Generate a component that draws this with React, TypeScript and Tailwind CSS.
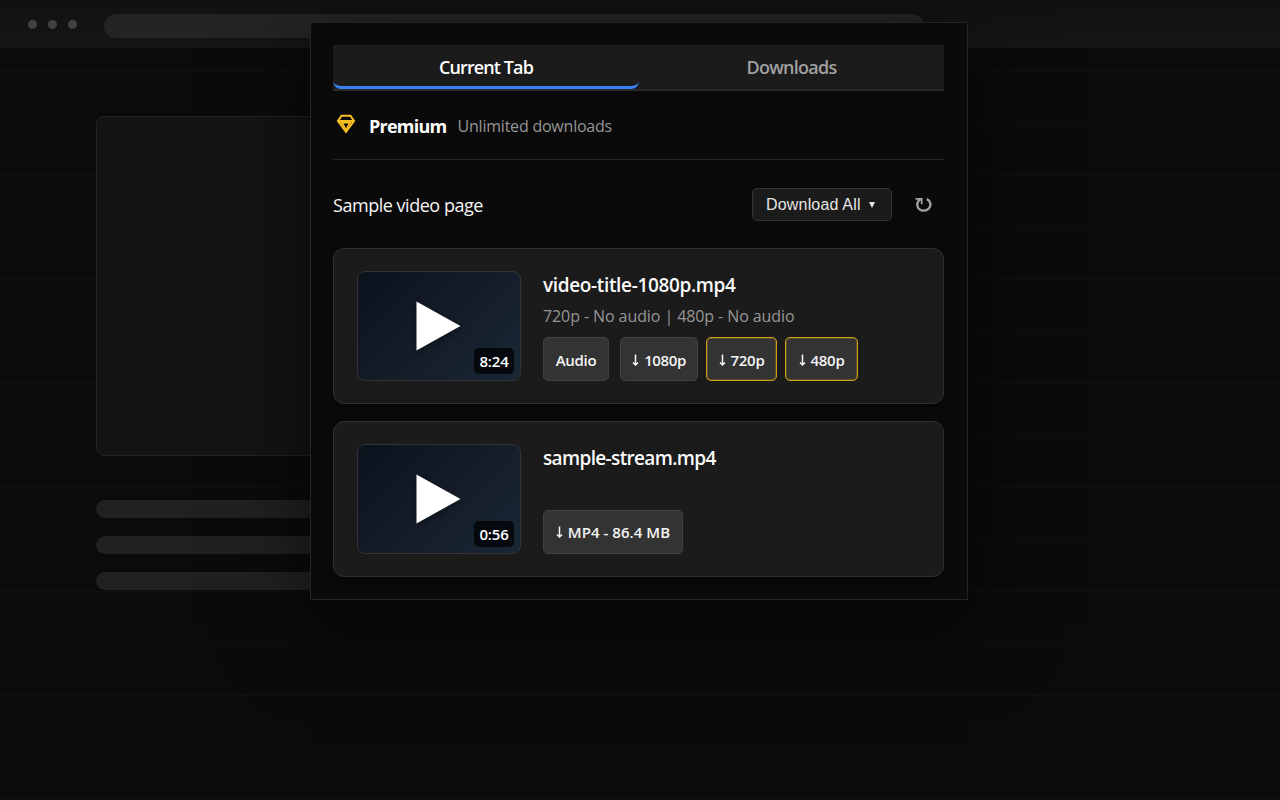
import React from 'react';

interface Action {
  label: string;
  arrow?: boolean;
  highlighted?: boolean;
  size: string;
}

interface Video {
  title: string;
  meta: string;
  duration: string;
  titleTracking: string;
  actions: Action[];
}

const videos: Video[] = [
  {
    title: 'video-title-1080p.mp4',
    meta: '720p - No audio | 480p - No audio',
    duration: '8:24',
    titleTracking: 'tracking-[-0.35px]',
    actions: [
      { label: 'Audio', size: 'w-[66px] mr-[11px] tracking-[-0.3px]' },
      { label: '1080p', arrow: true, size: 'w-[78px] mr-2 tracking-[-0.4px]' },
      { label: '720p', arrow: true, highlighted: true, size: 'w-[71px] mr-2 tracking-[-0.3px]' },
      { label: '480p', arrow: true, highlighted: true, size: 'w-[73px] tracking-[-0.3px]' },
    ],
  },
  {
    title: 'sample-stream.mp4',
    meta: '',
    duration: '0:56',
    titleTracking: 'tracking-[-0.65px]',
    actions: [{ label: 'MP4 - 86.4 MB', arrow: true, size: 'w-[140px] pb-[2px] tracking-[0.05px]' }],
  },
];

function PremiumIcon() {
  return (
    <svg className="mb-[2px] h-5 w-5" viewBox="0 0 20 20" fill="#fbbf24" fillRule="evenodd">
      <path d="M5 .7h10l4.300 6.300L10 19.500.7 7zM6 2.700 3.900 6.100h12.200L14 2.700zM3.900 8.200 10 16.300l6.100-8.100z" />
      <path d="M3.900 7.800h12.200L10 16.900zM7.500 9.400l2.500 4.800 2.500-4.800z" />
    </svg>
  );
}

function DownArrow() {
  return (
    <svg className="mt-[2px] mr-[5px] h-3 w-[7px] shrink-0" viewBox="0 0 7 12" fill="none" stroke="currentColor" strokeWidth="1.5">
      <path d="M3.5 0.500v10.500M1 8.500l2.500 2.500L6 8.500" />
    </svg>
  );
}

function RefreshIcon() {
  return (
    <svg className="h-4 w-[18px]" viewBox="0 0 18 16" fill="none" stroke="#a3a3a3" strokeWidth="2.400">
      <path d="M0.500 1.800h6.200v5.500" strokeWidth="1.700" />
      <path d="M5.500 2.500C3.200 3.500 2.200 5.700 2.300 8c.2 3.300 3 5.600 6.500 5.600 3.700 0 6.600-2.400 6.600-6.100 0-2.500-1.300-4.300-3.700-5.400" />
    </svg>
  );
}

function BrowserBackdrop() {
  return (
    <div className="h-full bg-[repeating-linear-gradient(to_bottom,#0b0b0b_0,#0b0b0b_51px,#111111_51px,#111111_52px)] bg-[position:0_20px]">
      <div className="flex h-12 items-start bg-gradient-to-b from-[#111111] to-[#161616] pl-7">
        <div className="mt-5 flex gap-[11px]">
          <span className="h-[9px] w-[9px] rounded-full bg-[#414141]" />
          <span className="h-[9px] w-[9px] rounded-full bg-[#414141]" />
          <span className="h-[9px] w-[9px] rounded-full bg-[#414141]" />
        </div>
        <div className="mt-[14px] ml-[27px] h-6 w-[820px] rounded-full bg-[#242424]" />
      </div>
      <div className="px-24 pt-[68px]">
        <div className="h-[340px] w-[620px] rounded-lg border border-[#242424] bg-[#141414]" />
        <div className="mt-11 flex flex-col gap-[18px]">
          <div className="h-[18px] w-[620px] rounded-full bg-[#212121]" />
          <div className="h-[18px] w-[540px] rounded-full bg-[#212121]" />
          <div className="h-[18px] w-[460px] rounded-full bg-[#212121]" />
        </div>
      </div>
    </div>
  );
}

function ActionButton({ action }: { action: Action }) {
  return (
    <button
      className={`flex h-11 items-center justify-center rounded-[5px] border bg-[#333333] text-[15px] font-[650] whitespace-nowrap text-[#f5f5f5] ${action.size} ${
        action.highlighted ? 'border-[#d4a017] shadow-[inset_0_0_0_1px_rgba(212,160,23,0.25)]' : 'border-[#424242]'
      }`}
    >
      {action.arrow && <DownArrow />}
      <span className="pt-[2px]">{action.label}</span>
    </button>
  );
}

function VideoCard({ video }: { video: Video }) {
  return (
    <div className="flex h-[156px] rounded-[11px] border border-[#303030] bg-[#1b1b1b] pt-[22px] pl-[23px] shadow-[0_3px_8px_rgba(0,0,0,0.4)]">
      <div className="relative flex h-[110px] w-[164px] items-center justify-center rounded-lg border border-[#333333] bg-[linear-gradient(135deg,#0c121c,#151c28_50%,#182735)]">
        <svg className="mr-px h-[50px] w-[45px] drop-shadow-[0_2px_3px_rgba(0,0,0,0.4)]" viewBox="0 0 45 50">
          <path d="M0.500 0.500v49L44.500 25z" fill="#ffffff" />
        </svg>
        <span className="absolute right-[6px] bottom-[6px] flex h-[26px] w-10 items-center justify-center rounded-[5px] bg-[#05080c] text-[15px] font-semibold tracking-[-0.2px] text-white">
          {video.duration}
        </span>
      </div>
      <div className="ml-[22px]">
        <h3 className={`h-7 text-[19px] leading-7 font-semibold whitespace-nowrap text-[#fafafa] ${video.titleTracking}`}>
          {video.title}
        </h3>
        <p className="mt-[5px] h-6 text-[16px] leading-6 tracking-[-0.09px] whitespace-nowrap text-[#969696]">{video.meta}</p>
        <div className="mt-[9px] flex">
          {video.actions.map((action) => (
            <ActionButton key={action.label} action={action} />
          ))}
        </div>
      </div>
    </div>
  );
}

export default function App() {
  return (
    <div className="relative h-[800px] w-[1280px] overflow-hidden bg-[#0b0b0b] font-['Open_Sans','Noto_Sans',sans-serif]">
      <BrowserBackdrop />

      {/* Extension popup */}
      <div className="absolute top-[22px] left-[310px] h-[578px] w-[658px] border border-[#242424] bg-[#0a0a0a] pt-[22px] pr-[23px] pl-[22px] shadow-[0_24px_80px_rgba(0,0,0,0.6)]">
        <div className="flex h-[46px] border-b-2 border-[#2a2a2a] bg-[#1b1b1b] text-[18px] font-semibold">
          <button className="flex h-11 w-[306px] items-center justify-center rounded-b-lg border-b-[3px] border-[#3b82f6] pt-1 tracking-[-0.9px] text-white">
            Current Tab
          </button>
          <button className="h-11 flex-1 tracking-[-0.75px] text-[#a0a0a0]">Downloads</button>
        </div>

        <div className="flex h-[69px] items-center border-b border-[#242424] pl-[3px]">
          <PremiumIcon />
          <span className="ml-[13px] pt-[2px] text-[18px] font-bold tracking-[-0.75px] text-white">Premium</span>
          <span className="ml-[11px] pt-[2px] text-[16px] tracking-[-0.22px] text-[#969696]">Unlimited downloads</span>
        </div>

        <div className="flex h-[88px] items-center">
          <h2 className="flex-1 pt-[2px] text-[18px] tracking-[-0.47px] text-[#f5f5f5]">Sample video page</h2>
          <button className="flex h-[33px] w-[140px] items-center rounded-[5px] border border-[#333333] bg-[#1b1b1b] pt-px pl-[13px] font-['Liberation_Sans',sans-serif] text-[16px] tracking-[0.18px] text-[#e5e5e5]">
            Download All
            <svg className="ml-2 h-[6px] w-[6px]" viewBox="0 0 6 6">
              <path d="M0 0h6L3 6z" fill="currentColor" />
            </svg>
          </button>
          <button className="mt-[2px] mr-[11px] ml-[23px]">
            <RefreshIcon />
          </button>
        </div>

        <div className="flex flex-col gap-[17px]">
          {videos.map((video) => (
            <VideoCard key={video.title} video={video} />
          ))}
        </div>
      </div>
    </div>
  );
}
